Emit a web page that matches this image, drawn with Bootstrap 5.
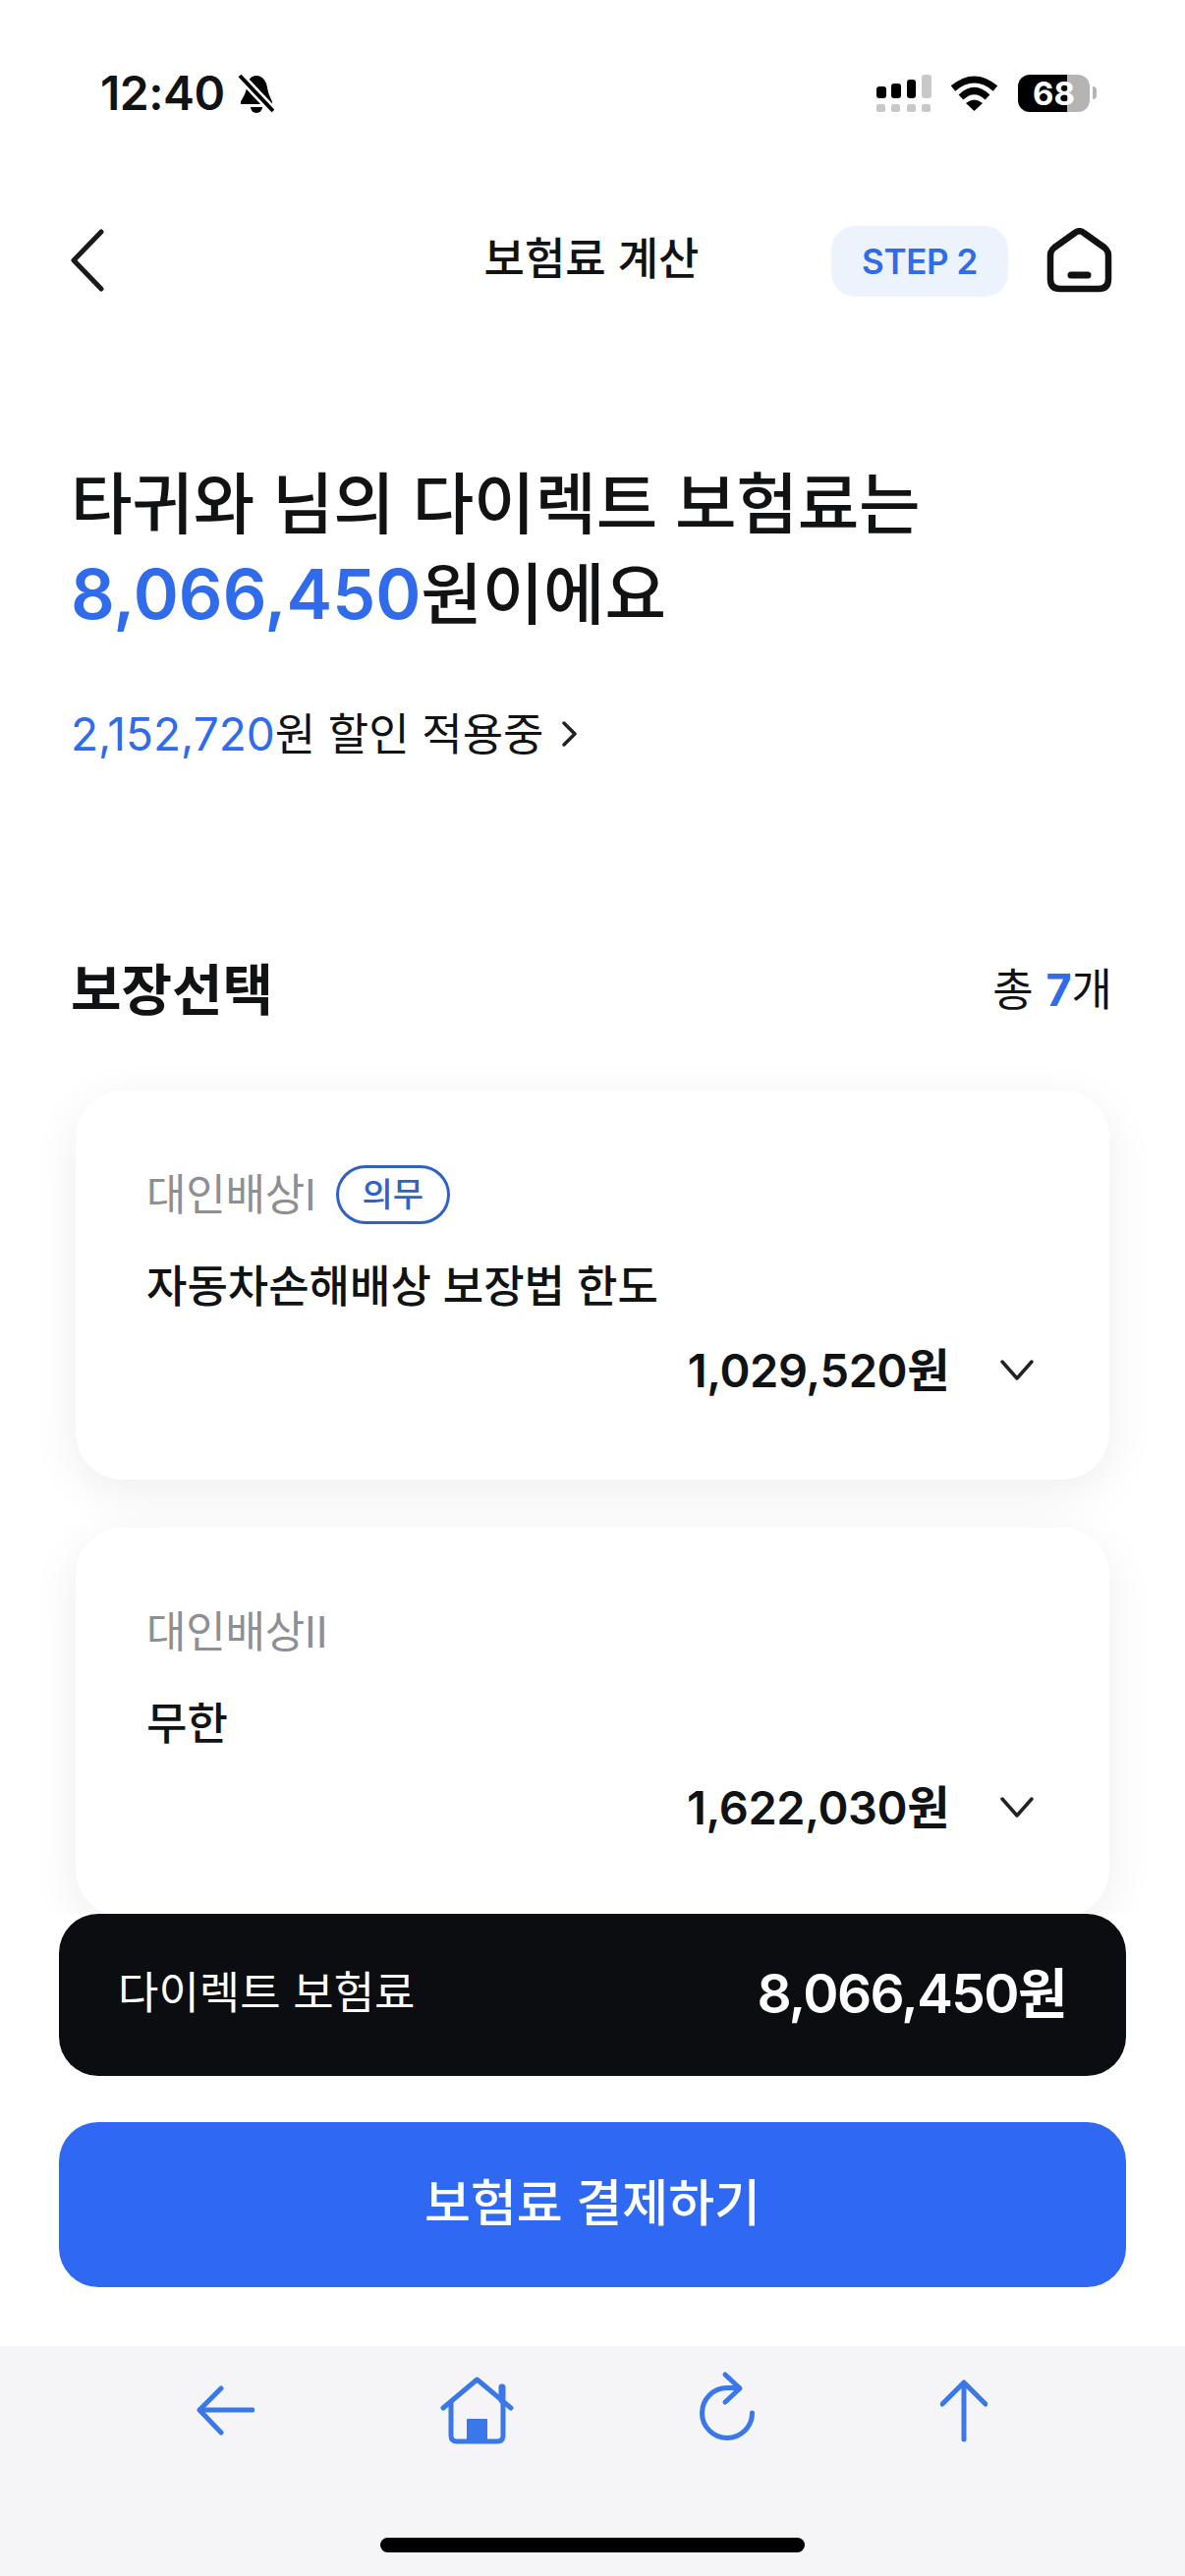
<!DOCTYPE html>
<html lang="ko">
<head>
  <meta charset="UTF-8" />
  <meta name="viewport" content="width=device-width, initial-scale=1.0" />
  <title>보험료 계산</title>
  <link href="https://cdn.jsdelivr.net/npm/bootstrap@5.3.3/dist/css/bootstrap.min.css" rel="stylesheet" />
  <style>
    body {
      font-family: Inter, "Noto Sans CJK KR", sans-serif;
      color: #111214;
      background: #fff;
    }
    .app-page { width: 1206px; height: 2622px; overflow: hidden; }
    .app-main { height: 1948px; overflow: hidden; }
    .tint-blue { color: #2f6bea; }

    /* status bar */
    .status-bar { height: 184px; padding: 5px 90px 0 102px; }
    .status-time { font-size: 48px; font-weight: 600; letter-spacing: -.5px; line-height: 1; }
    .status-bell { margin-left: 13px; }
    .status-wifi { margin: 0 20px 0 19px; }
    .batt-body {
      width: 73px; height: 38px; border-radius: 12px;
      background: linear-gradient(to right, #000 68%, #b4b4b4 68%);
      color: #fff; font-size: 33px; font-weight: 700; line-height: 38px; text-align: center;
    }
    .batt-nub { width: 4px; height: 13px; margin-left: 3px; background: #b4b4b4; border-radius: 0 4px 4px 0; }

    /* header */
    .top-head { height: 162px; padding: 0 74px 0 72px; }
    .top-side { flex: 1 1 0; }
    .top-title { font-size: 45px; font-weight: 500; line-height: 60px; margin-top: -2px; }
    .step-pill {
      width: 180px; height: 72px; margin-top: 2px; border-radius: 24px; background: #edf3fd;
      color: #2f6bea; font-size: 35px; font-weight: 600; letter-spacing: -.4px;
    }
    .home-btn { margin-left: 39px; }

    /* hero */
    .hero-title { margin: 121px 0 0 72px; font-size: 68px; font-weight: 500; line-height: 92px; letter-spacing: -.2px; }
    .hero-title .tint-blue { font-size: 70px; font-weight: 600; letter-spacing: 0; }
    .discount-row { margin: 66px 0 0 72px; font-size: 45px; line-height: 60px; height: 60px; }
    .discount-row .tint-blue { font-size: 46px; }
    .discount-row svg { margin-left: 18px; }

    /* section */
    .section-head { margin-top: 196px; padding: 0 74px 0 72px; height: 70px; }
    .section-title { font-size: 56px; font-weight: 600; line-height: 70px; }
    .section-count { font-size: 45px; line-height: 70px; }
    .section-count b { font-weight: 700; }

    /* coverage cards */
    .cover-list { margin: 67px 77px 0; gap: 49px; }
    .cover-card {
      height: 396px; flex: none; border: 0; border-radius: 48px;
      padding: 76px 77px 0 72px;
      box-shadow: 0 12px 50px rgba(0, 0, 0, .07);
    }
    .cover-label { height: 60px; font-size: 44px; color: #8e8e93; line-height: 60px; letter-spacing: -.2px; }
    .duty-tag {
      width: 116px; height: 60px; margin-left: 20px; border: 3px solid #2f62c4; border-radius: 30px;
      color: #2f62c4; font-size: 34px; font-weight: 500; letter-spacing: 0;
    }
    .cover-name { margin-top: 34px; font-size: 45px; font-weight: 500; line-height: 60px; }
    .cover-amount { margin-top: 25px; height: 60px; font-size: 47px; font-weight: 600; line-height: 60px; letter-spacing: -.4px; }
    .cover-amount svg { margin-left: 52px; }

    /* bottom */
    .pay-area { height: 440px; padding: 0 60px; }
    .total-bar {
      height: 165px; border-radius: 40px; background: #0c0d10; color: #fff; padding: 0 61px 3px 60px;
    }
    .total-label { font-size: 45px; }
    .total-value { font-size: 55px; font-weight: 600; letter-spacing: -1.600px; }
    .pay-btn {
      height: 168px; margin-top: 47px; padding-bottom: 8px; border: 0; border-radius: 40px;
      background: #2f69f3; color: #fff; font-size: 51px; font-weight: 500;
    }
    .pay-btn:hover { background: #2f69f3; color: #fff; }

    /* browser toolbar */
    .browser-bar { height: 234px; background: #f5f5f7; padding-top: 25px; }
    .browser-icons { padding-left: 200px; gap: 189px; }
    .browser-icons svg { fill: none; stroke: #3a78ea; stroke-width: 5; stroke-linecap: round; stroke-linejoin: round; }
    .home-line { width: 432px; height: 15px; margin: 90px auto 0; background: #000; border-radius: 8px; }
  </style>
</head>
<body>
  <div class="app-page d-flex flex-column">
    <div class="app-main">
      <!-- status bar -->
      <div class="status-bar d-flex align-items-center justify-content-between">
        <div class="d-flex align-items-center">
          <span class="status-time">12:40</span>
          <svg class="status-bell" width="37" height="40" viewBox="0 0 37 40">
            <path d="M19 2C25 2 29 7 30 14C31 22 35 27 35 29V31H3V29C3 27 8 22 9 14C10 7 13 2 19 2Z" fill="#000" />
            <path d="M13 34a6 6 0 0 0 12 0z" fill="#000" />
            <path d="M2 2L36 38" stroke="#fff" stroke-width="9" />
            <path d="M2 2L36 38" stroke="#000" stroke-width="4" />
          </svg>
        </div>
        <div class="d-flex align-items-center">
          <svg width="56" height="38" viewBox="0 0 56 38">
            <rect x="0" y="12" width="10" height="12" rx="3" fill="#000" />
            <rect x="15" y="9" width="10" height="15" rx="3" fill="#000" />
            <rect x="31" y="5" width="9" height="19" rx="3" fill="#000" />
            <rect x="46" y="0" width="10" height="24" rx="3" fill="#c8c8c8" />
            <rect x="0" y="30" width="9" height="8" rx="2" fill="#c8c8c8" />
            <rect x="15" y="30" width="9" height="8" rx="2" fill="#c8c8c8" />
            <rect x="31" y="30" width="9" height="8" rx="2" fill="#c8c8c8" />
            <rect x="46" y="30" width="9" height="8" rx="2" fill="#c8c8c8" />
          </svg>
          <svg class="status-wifi" width="49" height="36" viewBox="0 0 49 36">
            <path d="M3 13Q24.500 -5 46 13" fill="none" stroke="#000" stroke-width="7" />
            <path d="M11 22Q24.500 9 38 22" fill="none" stroke="#000" stroke-width="7" />
            <path d="M24.500 36L16 28Q24.500 21 33 28Z" fill="#000" />
          </svg>
          <div class="batt-body">68</div>
          <div class="batt-nub"></div>
        </div>
      </div>

      <!-- header -->
      <div class="top-head d-flex align-items-center">
        <div class="top-side">
          <svg class="d-block" width="34" height="64" viewBox="0 0 34 64" fill="none" stroke="#1a1a1a" stroke-width="5" stroke-linecap="round" stroke-linejoin="round">
            <path d="M31 3L3 32L31 61" />
          </svg>
        </div>
        <div class="top-title">보험료 계산</div>
        <div class="top-side d-flex align-items-center justify-content-end">
          <div class="step-pill d-flex align-items-center justify-content-center">STEP 2</div>
          <svg class="home-btn" width="67" height="66" viewBox="0 0 67 66" fill="none" stroke="#111" stroke-width="6.500" stroke-linejoin="round" stroke-linecap="round">
            <path d="M29 5Q33.500 1.500 38 5L59 20Q63 23 63 28V52Q63 62 53 62H14Q4 62 4 52V28Q4 23 8 20Z" />
            <path d="M25 48H42" stroke-width="7" />
          </svg>
        </div>
      </div>

      <!-- hero -->
      <h1 class="hero-title">타귀와 님의 다이렉트 보험료는<br><span class="tint-blue">8,066,450</span>원이에요</h1>
      <div class="discount-row d-flex align-items-center">
        <span><span class="tint-blue">2,152,720</span>원 할인 적용중</span>
        <svg width="17" height="26" viewBox="0 0 17 26" fill="none" stroke="#222" stroke-width="3.500" stroke-linecap="round" stroke-linejoin="round">
          <path d="M3 2L14 13L3 24" />
        </svg>
      </div>

      <!-- coverage -->
      <div class="section-head d-flex justify-content-between">
        <div class="section-title">보장선택</div>
        <div class="section-count">총 <b class="tint-blue">7</b>개</div>
      </div>
      <div class="cover-list d-flex flex-column">
        <div class="card cover-card">
          <div class="cover-label d-flex align-items-center">
            대인배상I
            <span class="duty-tag d-flex align-items-center justify-content-center">의무</span>
          </div>
          <div class="cover-name">자동차손해배상 보장법 한도</div>
          <div class="cover-amount d-flex align-items-center justify-content-end">
            1,029,520원
            <svg width="34" height="24" viewBox="0 0 34 24" fill="none" stroke="#222" stroke-width="3.500" stroke-linecap="round" stroke-linejoin="round">
              <path d="M2 3L17 20L32 3" />
            </svg>
          </div>
        </div>
        <div class="card cover-card">
          <div class="cover-label d-flex align-items-center">대인배상II</div>
          <div class="cover-name">무한</div>
          <div class="cover-amount d-flex align-items-center justify-content-end">
            1,622,030원
            <svg width="34" height="24" viewBox="0 0 34 24" fill="none" stroke="#222" stroke-width="3.500" stroke-linecap="round" stroke-linejoin="round">
              <path d="M2 3L17 20L32 3" />
            </svg>
          </div>
        </div>
      </div>
    </div>

    <!-- bottom pay area -->
    <div class="pay-area d-flex flex-column">
      <div class="total-bar d-flex align-items-center justify-content-between">
        <span class="total-label">다이렉트 보험료</span>
        <span class="total-value">8,066,450원</span>
      </div>
      <button type="button" class="btn pay-btn w-100">보험료 결제하기</button>
    </div>

    <!-- browser toolbar -->
    <div class="browser-bar">
      <div class="browser-icons d-flex">
        <svg width="59" height="80" viewBox="0 0 59 80">
          <path d="M57 40H3M25 18L3 40L25 63" />
        </svg>
        <svg width="75" height="80" viewBox="0 0 75 80">
          <path d="M3 38L37.500 9L72 38" />
          <path d="M11 32V66Q11 72 17 72H58Q64 72 64 66V32" />
          <path d="M63 17V30" stroke-width="7" />
          <path d="M28 72V50H47V72Z" fill="#3a78ea" stroke-width="2" />
        </svg>
        <svg width="56" height="80" viewBox="0 0 56 80">
          <path d="M53.500 43A25.500 25.500 0 1 1 28 17.500H40" />
          <path d="M26 4L41 18L26 32" />
        </svg>
        <svg width="48" height="80" viewBox="0 0 48 80">
          <path d="M24 70V12M2 34L24 12L46 34" />
        </svg>
      </div>
      <div class="home-line"></div>
    </div>
  </div>

  <script src="https://cdn.jsdelivr.net/npm/bootstrap@5.3.3/dist/js/bootstrap.bundle.min.js"></script>
</body>
</html>
